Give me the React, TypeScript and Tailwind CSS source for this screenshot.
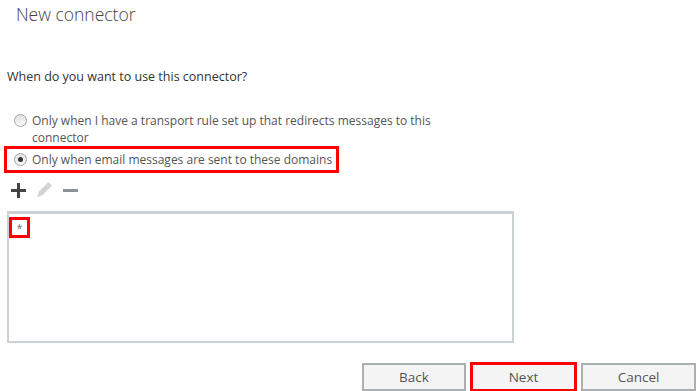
import React from 'react';

function Radio({ checked }: { checked?: boolean }) {
  return (
    <span className="relative inline-flex h-[13px] w-[13px] shrink-0 items-center justify-center rounded-full border border-[#a3a3a3] bg-gradient-to-b from-[#e2e2e2] to-[#f8f8f8]">
      {checked && <span className="h-[5px] w-[5px] rounded-full bg-[#333]" />}
    </span>
  );
}

export default function App() {
  return (
    <div className="h-[391px] w-[700px] overflow-hidden bg-white font-['Open_Sans',sans-serif]">
      <h1 className="pl-4 pt-px text-[17.5px] font-light leading-[26px] text-[#444]">New connector</h1>

      <p className="mt-[40px] pl-[7px] text-[12.5px] leading-[20px] text-[#333]">
        When do you want to use this connector?
      </p>

      {/* Options */}
      <div className="mt-[25px] flex pl-[14px] text-[12px] leading-[17px] text-[#555]">
        <div className="pt-[2px]">
          <Radio />
        </div>
        <span className="ml-[5px] w-[400px]">
          Only when I have a transport rule set up that redirects messages to this connector
        </span>
      </div>

      <div className="ml-[4px] flex w-[335px] items-center border-[3px] border-[#f00] py-[2px] pl-[7px] text-[12px] leading-[17px] text-[#555]">
        <Radio checked />
        <span className="ml-[5px] whitespace-nowrap">Only when email messages are sent to these domains</span>
      </div>

      {/* Toolbar */}
      <div className="mt-[9px] flex h-4 items-center pl-[10px]">
        <svg width="17" height="17" viewBox="0 0 17 17">
          <path d="M8.5 1v15M1 8.5h15" stroke="#444" strokeWidth="3" />
        </svg>
        <svg className="ml-[8px]" width="18" height="18" viewBox="0 0 16 16">
          <path d="M2 14.5L3.4 9.4 11.9 0.9 15.1 4.1 6.6 12.6z" fill="#d3d3d3" />
        </svg>
        <svg className="ml-[9px]" width="17" height="17" viewBox="0 0 17 17">
          <path d="M1 8.5h15" stroke="#8a9399" strokeWidth="3" />
        </svg>
      </div>

      {/* Domain list */}
      <div className="ml-[7px] mt-[13px] h-[132px] w-[507px] border-2 border-t-[3px] border-[#cbd1d4] pt-[3px]">
        <div className="flex h-[21px] w-[21px] items-center justify-center border-[3px] border-[#f00] text-[10px] leading-none text-[#666]">
          *
        </div>
      </div>

      {/* Buttons */}
      <div className="mt-[19px] flex justify-end gap-[4px] pr-[4px] text-[13.5px] text-[#555]">
        <button className="mt-px h-[28px] w-[104px] border-2 border-[#abb0b3] bg-[#f4f4f4]">Back</button>
        <button className="h-[30px] w-[107px] border-[3px] border-[#f00] bg-[#f4f4f4]">Next</button>
        <button className="mt-px h-[28px] w-[115px] border-2 border-[#abb0b3] bg-[#f4f4f4]">Cancel</button>
      </div>
    </div>
  );
}
